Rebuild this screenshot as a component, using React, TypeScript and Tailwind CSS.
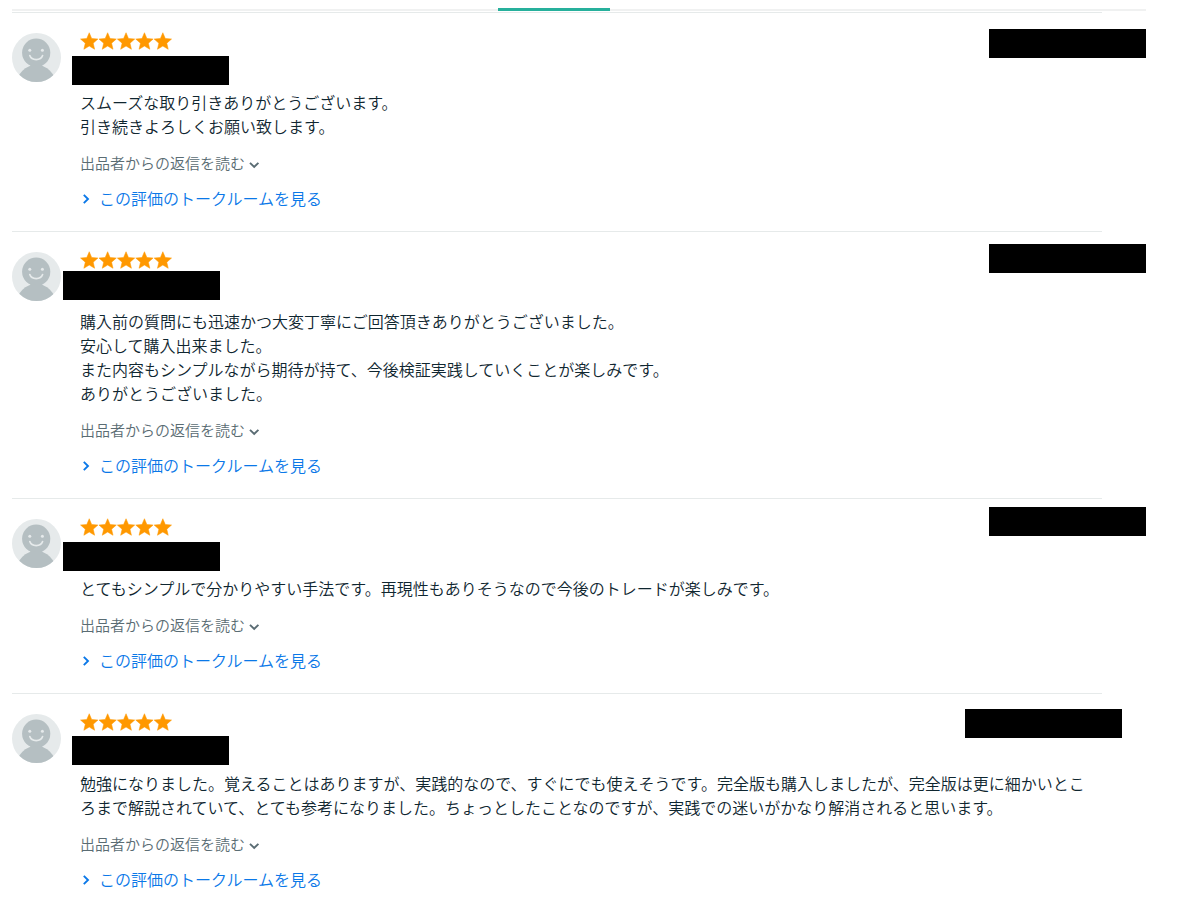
type Review = {
  id: number;
  comment: string[];
  nameMask: string;
  dateMask: string;
};

const reviews: Review[] = [
  {
    id: 1,
    comment: ['スムーズな取り引きありがとうございます。', '引き続きよろしくお願い致します。'],
    nameMask: 'left-[60px] top-[43px]',
    dateMask: '-right-11 top-4',
  },
  {
    id: 2,
    comment: [
      '購入前の質問にも迅速かつ大変丁寧にご回答頂きありがとうございました。',
      '安心して購入出来ました。',
      'また内容もシンプルながら期待が持て、今後検証実践していくことが楽しみです。',
      'ありがとうございました。',
    ],
    nameMask: 'left-[51px] top-[39px]',
    dateMask: '-right-11 top-3',
  },
  {
    id: 3,
    comment: ['とてもシンプルで分かりやすい手法です。再現性もありそうなので今後のトレードが楽しみです。'],
    nameMask: 'left-[51px] top-[43px]',
    dateMask: '-right-11 top-2',
  },
  {
    id: 4,
    comment: [
      '勉強になりました。覚えることはありますが、実践的なので、すぐにでも使えそうです。完全版も購入しましたが、完全版は更に細かいところまで解説されていて、とても参考になりました。ちょっとしたことなのですが、実践での迷いがかなり解消されると思います。',
    ],
    nameMask: 'left-[60px] top-[42px]',
    dateMask: '-right-5 top-[15px]',
  },
];

function Avatar({ id }: { id: number }) {
  const clip = `avatar-clip-${id}`;
  return (
    <svg className="size-[49px] shrink-0" viewBox="0 0 49 49" aria-hidden="true">
      <clipPath id={clip}>
        <circle cx="24.5" cy="24.5" r="24.5" />
      </clipPath>
      <g clipPath={`url(#${clip})`}>
        <rect width="49" height="49" fill="#e6eaeb" />
        <circle cx="24.2" cy="19.7" r="14.1" fill="#b5bfc2" />
        <path d="M19 31.5h10.5l3 4h-16z" fill="#b5bfc2" />
        <circle cx="24.2" cy="51.5" r="19.5" fill="#b5bfc2" />
      </g>
      <circle cx="17.8" cy="17.2" r="1.5" fill="#e6eaeb" />
      <circle cx="30.4" cy="17.2" r="1.5" fill="#e6eaeb" />
      <path
        d="M17.8 22.6C19.6 28 28.8 28 30.6 22.6"
        fill="none"
        stroke="#e6eaeb"
        strokeWidth="1.7"
        strokeLinecap="round"
      />
    </svg>
  );
}

function Stars() {
  return (
    <svg className="block h-[18px] w-[92px] overflow-visible" viewBox="0 0 92 18" role="img" aria-label="5">
      {[0, 18.4, 36.8, 55.2, 73.6].map((x) => (
        <path
          key={x}
          transform={`translate(${x - 1.2} -2) scale(0.87)`}
          d="M12 17.27 18.18 21l-1.64-7.03L22 9.24l-7.19-.61L12 2 9.19 8.63 2 9.24l5.46 4.73L5.82 21z"
          fill="#ff9800"
          stroke="#ff9800"
          strokeWidth="0.6"
          strokeLinejoin="round"
        />
      ))}
    </svg>
  );
}

function ReviewItem({ review }: { review: Review }) {
  return (
    <li className="relative flex gap-[19px] border-t border-[#e6eaea] pt-5 pb-[21px]">
      <Avatar id={review.id} />
      <div className="min-w-0 flex-1">
        <Stars />
        <div className="mt-[39px] pr-2 text-base leading-6 font-[350] text-[#0f2630]">
          {review.comment.map((line) => (
            <p key={line}>{line}</p>
          ))}
        </div>
        <button type="button" className="mt-[13px] flex h-6 items-center gap-1 text-[15px] font-[350] text-[#5a6c73]">
          出品者からの返信を読む
          <svg className="mt-1 size-3" viewBox="0 0 12 12" fill="none" stroke="currentColor" strokeWidth="1.9" aria-hidden="true">
            <path d="M1 3.8 5.2 8l4.2-4.2" />
          </svg>
        </button>
        <a href="#talkroom" className="mt-[11px] flex h-6 w-fit items-center gap-[7px] text-base font-[350] text-[#0a78e8]">
          <svg className="mt-0.5 size-3" viewBox="0 0 12 12" fill="none" stroke="currentColor" strokeWidth="1.9" aria-hidden="true">
            <path d="M3.8 1.8 8 6l-4.2 4.2" />
          </svg>
          この評価のトークルームを見る
        </a>
      </div>
      <span className={`absolute h-[29px] w-[157px] bg-black ${review.nameMask}`} />
      <span className={`absolute h-[29px] w-[157px] bg-black ${review.dateMask}`} />
    </li>
  );
}

export default function App() {
  return (
    <main className="bg-white pt-2 pr-11 pl-3 font-['Noto_Sans_CJK_JP',sans-serif]">
      <div className="h-[3px] bg-linear-to-b from-transparent from-34% to-[#f0f1f1] to-34%">
        <div className="ml-[486px] h-[3px] w-28 bg-[#26b09c]" />
      </div>
      <ul className="mt-px mr-11">
        {reviews.map((review) => (
          <ReviewItem key={review.id} review={review} />
        ))}
      </ul>
    </main>
  );
}
